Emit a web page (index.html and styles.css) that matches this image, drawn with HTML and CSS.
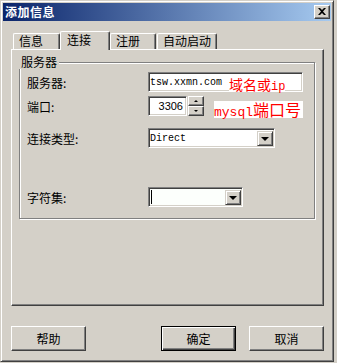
FILE: index.html
```html
<!DOCTYPE html>
<html lang="zh">
    <head>
        <meta charset="UTF-8" />
        <title>添加信息</title>
        <link rel="stylesheet" href="styles.css">
    </head>
    <body>
        <div class="window">
            <div class="titlebar">
                <span class="title">添加信息</span>
                <div class="close">
                    <svg width="8" height="7" viewBox="0 0 8 7">
                        <path d="M0 0h2l2 2 2-2h2L5 3.5 8 7H6L4 5 2 7H0l3-3.5z" fill="#000" />
                    </svg>
                </div>
            </div>

            <div class="client">
                <div class="tabs">
                    <div class="tab tab-info">信息</div>
                    <div class="tab tab-conn active">连接</div>
                    <div class="tab tab-reg">注册</div>
                    <div class="tab tab-auto">自动启动</div>
                </div>

                <div class="panel">
                    <fieldset class="group">
                        <legend>服务器</legend>

                        <div class="row row-server">
                            <span class="label">服务器:</span>
                            <div class="edit edit-server">
                                <span class="mono">tsw.xxmn.com</span>
                                <span class="note note-server">域名或<span class="latin">ip</span></span>
                            </div>
                        </div>

                        <div class="row row-port">
                            <span class="label">端口:</span>
                            <div class="edit edit-port">3306</div>
                            <div class="spin">
                                <div class="spin-btn"><span class="arrow up"></span></div>
                                <div class="spin-btn"><span class="arrow down"></span></div>
                            </div>
                            <span class="note note-port"><span class="latin">mysql</span>端口号</span>
                        </div>

                        <div class="row row-type">
                            <span class="label">连接类型:</span>
                            <div class="combo combo-type">
                                <span class="mono">Direct</span>
                                <div class="drop"><span class="arrow down big"></span></div>
                            </div>
                        </div>

                        <div class="row row-charset">
                            <span class="label">字符集:</span>
                            <div class="combo combo-charset">
                                <span class="caret"></span>
                                <div class="drop"><span class="arrow down big"></span></div>
                            </div>
                        </div>
                    </fieldset>
                </div>

                <div class="buttons">
                    <div class="btn">帮助</div>
                    <div class="btn default push">确定</div>
                    <div class="btn">取消</div>
                </div>
            </div>
        </div>
    </body>
</html>
```

FILE: styles.css
```css
body {
    margin: 0;
    background-color: #d4d0c8;
    font-family: "Noto Sans CJK SC", "Liberation Sans", sans-serif;
    font-size: 12px;
    color: #000;
}

.window {
    width: 334px;
    height: 362px;
    box-sizing: border-box;
    padding: 2px;
    background-color: #d4d0c8;
    border: 1px solid;
    border-color: #d4d0c8 #404040 #404040 #d4d0c8;
    box-shadow: inset 1px 1px 0 #fff, inset -1px -1px 0 #808080;
    display: flex;
    flex-direction: column;
}

/* title bar */
.titlebar {
    height: 18px;
    flex: none;
    display: flex;
    align-items: center;
    justify-content: space-between;
    padding: 0 1px 0 2px;
    background: linear-gradient(to right, #0a246a, #a6caf0);
}

.title {
    color: #fff;
    font-weight: bold;
    font-size: 12px;
    line-height: 14px;
    letter-spacing: 0.5px;
}

.close {
    width: 16px;
    height: 14px;
    box-sizing: border-box;
    background-color: #d4d0c8;
    border: 1px solid;
    border-color: #fff #404040 #404040 #fff;
    box-shadow: inset -1px -1px 0 #808080;
    display: flex;
    align-items: center;
    justify-content: center;
}

.close svg {
    display: block;
    margin: 0 1px 1px 0;
}

.client {
    flex: 1;
    display: flex;
    flex-direction: column;
    padding: 0 7px 0 8px;
}

/* tabs */
.tabs {
    display: flex;
    align-items: flex-end;
    height: 18px;
    margin-top: 10px;
    padding-left: 2px;
    position: relative;
    z-index: 1;
}

.tab {
    height: 16px;
    box-sizing: border-box;
    border-top: 1px solid #fff;
    border-left: 1px solid #fff;
    border-right: 1px solid #404040;
    box-shadow: inset -1px 0 0 #808080;
    border-radius: 2px 2px 0 0;
    background-color: #d4d0c8;
    line-height: 14px;
    padding-left: 5px;
}

.tab-info {
    width: 47px;
}

.tab-conn {
    width: 50px;
}

.tab-reg {
    width: 46px;
    margin-right: 1px;
}

.tab-auto {
    width: 60px;
}

.tab.active {
    height: 19px;
    margin-bottom: -1px;
    line-height: 15px;
    padding-left: 6px;
}

/* panel */
.panel {
    height: 257px;
    box-sizing: border-box;
    border: 1px solid;
    border-color: #fff #404040 #404040 #fff;
    box-shadow: inset -1px -1px 0 #808080;
    padding: 0 7px 0 7px;
}

.group {
    margin: 5px 0 0 0;
    padding: 0 7px 11px 7px;
    border: 1px solid #808080;
    box-shadow: 1px 1px 0 #fff, inset 1px 1px 0 #fff;
    width: 296px;
    box-sizing: border-box;
}

.group legend {
    margin-left: -8px;
    padding: 0 2px;
    line-height: 14px;
    background-color: #d4d0c8;
}

.row {
    display: flex;
    align-items: center;
    height: 20px;
}

.row-server {
    margin-top: 3px;
}

.row-port {
    margin-top: 4px;
}

.row-type {
    margin-top: 12px;
}

.row-charset {
    margin-top: 39px;
}

.label {
    width: 121px;
    flex: none;
}

/* sunken edit boxes */
.edit,
.combo {
    height: 20px;
    box-sizing: border-box;
    background-color: #fff;
    border: 1px solid;
    border-color: #808080 #fff #fff #808080;
    box-shadow: inset 1px 1px 0 #404040, inset -1px -1px 0 #d4d0c8;
    display: flex;
    align-items: center;
    position: relative;
}

.mono {
    font-family: "Liberation Mono", monospace;
    font-size: 10px;
    padding-left: 1px;
}

.edit-server {
    width: 155px;
}

.edit-port {
    width: 39px;
    justify-content: flex-end;
    padding-right: 3px;
    font-family: "Liberation Sans", sans-serif;
    font-size: 11px;
}

.spin {
    width: 16px;
    height: 20px;
    margin-left: 1px;
    display: flex;
    flex-direction: column;
}

.spin-btn {
    flex: 1;
    box-sizing: border-box;
    border: 1px solid;
    border-color: #fff #404040 #404040 #fff;
    box-shadow: inset -1px -1px 0 #808080;
    background-color: #d4d0c8;
    display: flex;
    align-items: center;
    justify-content: center;
}

.arrow {
    width: 0;
    height: 0;
    border-left: 2px solid transparent;
    border-right: 2px solid transparent;
}

.arrow.up {
    border-bottom: 2px solid #000;
}

.arrow.down {
    border-top: 2px solid #000;
}

.arrow.big {
    border-left-width: 4px;
    border-right-width: 4px;
    border-top-width: 4px;
}

.combo-type {
    width: 127px;
}

.combo-charset {
    width: 95px;
    background-color: #fcfffc;
}

.combo .drop {
    position: absolute;
    right: 1px;
    top: 2px;
    width: 16px;
    height: 15px;
    box-sizing: border-box;
    border: 1px solid;
    border-color: #d4d0c8 #404040 #404040 #d4d0c8;
    box-shadow: inset 1px 1px 0 #fff, inset -1px -1px 0 #808080;
    background-color: #d4d0c8;
    display: flex;
    align-items: center;
    justify-content: center;
}

.caret {
    width: 1px;
    height: 14px;
    margin-left: 2px;
    background-color: #000;
}

/* red notes pasted on top */
.note {
    color: #ff0000;
    background-color: #fff;
    white-space: nowrap;
}

.note .latin {
    font-family: "Liberation Mono", monospace;
}

.note-server {
    position: absolute;
    left: 80px;
    top: 3px;
    height: 16px;
    width: 56px;
    font-size: 14px;
    line-height: 16px;
}

.note-server .latin {
    font-size: 12px;
}

.note-port {
    margin-left: 10px;
    margin-top: 7px;
    height: 17px;
    width: 89px;
    font-size: 16px;
    line-height: 17px;
}

.note-port .latin {
    font-size: 13px;
}

/* bottom buttons */
.buttons {
    display: flex;
    gap: 13px;
    margin-top: 20px;
}

.btn {
    width: 75px;
    height: 25px;
    box-sizing: border-box;
    border: 1px solid;
    border-color: #fff #404040 #404040 #fff;
    box-shadow: inset -1px -1px 0 #808080;
    display: flex;
    align-items: center;
    justify-content: center;
}

.btn.default {
    border-color: #000;
    box-shadow: inset 1px 1px 0 #fff, inset -1px -1px 0 #404040, inset -2px -2px 0 #808080;
}

.push {
    margin-left: auto;
}
```
